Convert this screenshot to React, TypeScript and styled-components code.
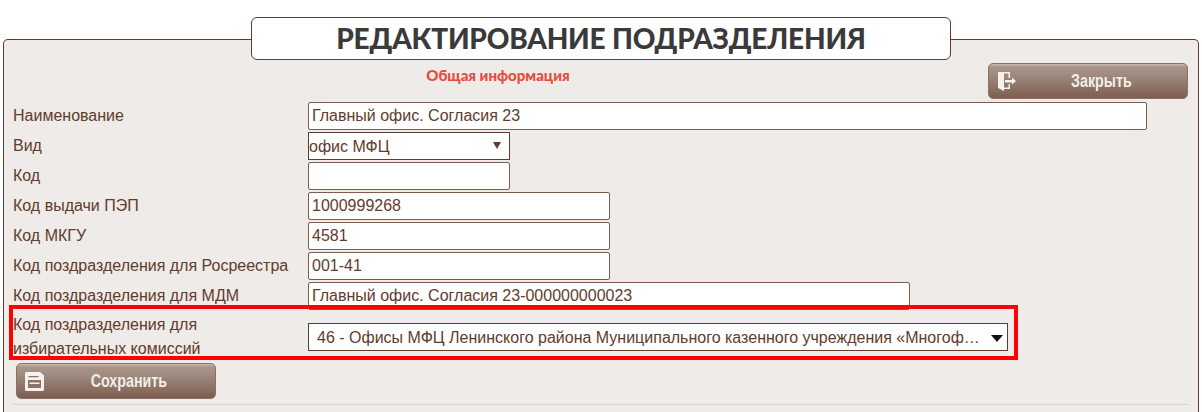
import React from "react";
import styled, { createGlobalStyle } from "styled-components";

const GlobalStyle = createGlobalStyle`
  html, body {
    margin: 0;
    height: 100%;
    overflow: hidden;
    background: #ffffff;
  }
`;

const Panel = styled.div`
  box-sizing: border-box;
  margin: 39px 3px 0 3px;
  height: 373px;
  background: #efebe8;
  border: 1px solid #5f3c2c;
  border-bottom: 0;
  border-radius: 5px 5px 0 0;
  font-family: "Liberation Sans", Arial, sans-serif;
  font-size: 16px;
  color: #5f3c2c;
`;

const Title = styled.h1`
  box-sizing: border-box;
  width: 700px;
  height: 43px;
  margin: -23px 0 0 247px;
  background: #ffffff;
  border: 1px solid #5f3c2c;
  border-radius: 6px;
  font-family: Lato, sans-serif;
  font-size: 28px;
  font-weight: 900;
  line-height: 41px;
  letter-spacing: -0.2px;
  text-align: center;
  color: #3a3a3a;
`;

const Header = styled.div`
  display: flex;
  align-items: flex-start;
  height: 41px;
  padding: 3px 10px 0 0;
  box-sizing: border-box;
`;

const SectionName = styled.div`
  flex: 1;
  padding: 4px 0 0 4px;
  text-align: center;
  font-family: Lato, sans-serif;
  font-size: 15px;
  font-weight: 900;
  line-height: 17px;
  color: #e74c3c;
`;

const ActionButton = styled.button`
  display: flex;
  align-items: center;
  box-sizing: border-box;
  width: 200px;
  height: 36px;
  padding: 0 6px 0 8px;
  background: linear-gradient(#c9bcb3 0, #a99589 3px, #a08c80 30%, #7d5e50 100%);
  border: 1px solid #8c7063;
  border-radius: 5px;
  cursor: pointer;
`;

const ButtonSlot = styled.span`
  flex: 1;
  text-align: center;
`;

const ButtonText = styled.span`
  display: inline-block;
  transform: scaleX(0.75);
  font-family: "Liberation Sans", sans-serif;
  font-size: 19px;
  font-weight: 700;
  color: #f3eeea;
`;

const Form = styled.div`
  padding: 0 0 0 9px;
`;

const Row = styled.div<{ $highlight?: boolean }>`
  position: relative;
  display: grid;
  grid-template-columns: 295px 1fr;
  align-items: center;
  height: ${(p) => (p.$highlight ? "48px" : "30px")};
  margin-top: ${(p) => (p.$highlight ? "2px" : "0")};

  ${(p) =>
    p.$highlight &&
    `
    &::after {
      content: "";
      position: absolute;
      left: -4px;
      top: -8px;
      box-sizing: border-box;
      width: 1009px;
      height: 55px;
      border: 4px solid #ff0000;
      pointer-events: none;
    }
  `}
`;

const Label = styled.label`
  line-height: 24px;
`;

const TextInput = styled.input<{ $width: number }>`
  display: block;
  box-sizing: border-box;
  width: ${(p) => p.$width}px;
  height: 28px;
  padding: 0 3px;
  background: #ffffff;
  border: 1px solid #7c5c4d;
  border-radius: 2px;
  font-family: "Liberation Sans", Arial, sans-serif;
  font-size: 16px;
  color: #5f3c2c;
  outline: none;
`;

const SelectBox = styled.div<{ $width: number }>`
  position: relative;
  width: ${(p) => p.$width}px;
  height: 28px;
`;

const Select = styled.select<{ $inset: number }>`
  display: block;
  box-sizing: border-box;
  width: 100%;
  height: 100%;
  appearance: none;
  padding: 0 24px 0 ${(p) => p.$inset}px;
  background: #ffffff;
  border: 1px solid #5f3c2c;
  border-radius: 0;
  font-family: "Liberation Sans", Arial, sans-serif;
  font-size: 16px;
  color: #5f3c2c;
  text-overflow: ellipsis;
  outline: none;
`;

const Arrow = styled.span<{ $large?: boolean }>`
  position: absolute;
  top: ${(p) => (p.$large ? "12px" : "10px")};
  right: ${(p) => (p.$large ? "5px" : "9px")};
  border-style: solid;
  border-color: ${(p) => (p.$large ? "#111111" : "#5f3c2c")} transparent transparent transparent;
  border-width: ${(p) => (p.$large ? "7px 6.5px 0 6.5px" : "7px 4.5px 0 4.5px")};
  pointer-events: none;
`;

const SaveRow = styled.div`
  padding: 2px 0 0 3px;
`;

const Divider = styled.hr`
  width: 1176px;
  height: 1px;
  margin: 5px 0 0 0;
  background: #d8d2cd;
  border: 0;
`;

const ExitIcon = () => (
  <svg width="24" height="19" viewBox="0 0 24 19" fill="#f5f1ee">
    <path d="M1 0h12v6h-1.500V1.500H7V19l-6-3z" />
    <path d="M7 15.500h4.500V12H13v5H7z" />
    <path d="M8 8h7V5.500l4 3.500-4 3.500V10.500H8z" />
  </svg>
);

const SaveIcon = () => (
  <svg width="24" height="19" viewBox="0 0 24 19">
    <path fill="#f5f1ee" d="M1.500 0H15l4 3.500V17.500a1.500 1.500 0 0 1-1.500 1.500h-16A1.500 1.500 0 0 1 0 17.500V1.500A1.500 1.500 0 0 1 1.500 0z" />
    <path fill="#8f7265" d="M3.500 4h10v1.300h-10zM3 8h13v8H3z" />
    <path fill="#f5f1ee" d="M4.500 10.500h10V12h-10z" />
  </svg>
);

const fields = [
  { label: "Код", value: "", width: 202 },
  { label: "Код выдачи ПЭП", value: "1000999268", width: 302 },
  { label: "Код МКГУ", value: "4581", width: 302 },
  { label: "Код поздразделения для Росреестра", value: "001-41", width: 302 },
  { label: "Код поздразделения для МДМ", value: "Главный офис. Согласия 23-000000000023", width: 602 },
];

const electionOption =
  "46 - Офисы МФЦ Ленинского района Муниципального казенного учреждения «Многофункциональный центр»";

export default function App() {
  return (
    <>
      <GlobalStyle />
      <Panel>
        <Title>РЕДАКТИРОВАНИЕ ПОДРАЗДЕЛЕНИЯ</Title>
        <Header>
          <SectionName>Общая информация</SectionName>
          <ActionButton>
            <ExitIcon />
            <ButtonSlot>
              <ButtonText>Закрыть</ButtonText>
            </ButtonSlot>
          </ActionButton>
        </Header>
        <Form>
          <Row>
            <Label>Наименование</Label>
            <TextInput $width={839} defaultValue="Главный офис. Согласия 23" readOnly />
          </Row>
          <Row>
            <Label>Вид</Label>
            <SelectBox $width={202}>
              <Select $inset={0} defaultValue="офис МФЦ">
                <option>офис МФЦ</option>
              </Select>
              <Arrow />
            </SelectBox>
          </Row>
          {fields.map((f) => (
            <Row key={f.label}>
              <Label>{f.label}</Label>
              <TextInput $width={f.width} defaultValue={f.value} readOnly />
            </Row>
          ))}
          <Row $highlight>
            <Label>
              Код поздразделения для
              <br />
              избирательных комиссий
            </Label>
            <SelectBox $width={700}>
              <Select $inset={8} defaultValue={electionOption}>
                <option>{electionOption}</option>
              </Select>
              <Arrow $large />
            </SelectBox>
          </Row>
          <SaveRow>
            <ActionButton>
              <SaveIcon />
              <ButtonSlot>
                <ButtonText>Сохранить</ButtonText>
              </ButtonSlot>
            </ActionButton>
          </SaveRow>
          <Divider />
        </Form>
      </Panel>
    </>
  );
}
